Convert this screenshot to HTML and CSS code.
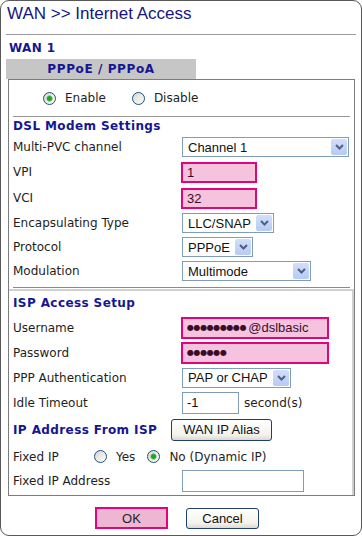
FILE: index.html
```html
<!DOCTYPE html>
<html lang="en">
<head>
  <meta charset="UTF-8" />
  <title>WAN - Internet Access</title>
  <link rel="stylesheet" href="styles.css">
</head>
<body>

  <div class="frame">
    <div class="title">WAN &gt;&gt; Internet Access</div>
    <div class="wan-name">WAN 1</div>
    <div class="tab">PPPoE / PPPoA</div>

    <div class="panel">
      <div class="dsl">
        <div class="enable-row">
          <label class="radio-opt"><span class="radio checked"></span>Enable</label>
          <label class="radio-opt"><span class="radio"></span>Disable</label>
        </div>
        <div class="heading">DSL Modem Settings</div>
        <div class="row">
          <span class="label">Multi-PVC channel</span>
          <div class="select w-channel"><span class="sel-text">Channel 1</span><span class="sel-arrow"><svg width="9" height="6" viewBox="0 0 9 6"><path d="M1 1l3.5 3.5L8 1" stroke="#4d6185" stroke-width="2" fill="none"/></svg></span></div>
        </div>
        <div class="row tall">
          <span class="label">VPI</span>
          <div class="pink w-short">1</div>
        </div>
        <div class="row tall">
          <span class="label">VCI</span>
          <div class="pink w-short">32</div>
        </div>
        <div class="row">
          <span class="label">Encapsulating Type</span>
          <div class="select w-encap"><span class="sel-text">LLC/SNAP</span><span class="sel-arrow"><svg width="9" height="6" viewBox="0 0 9 6"><path d="M1 1l3.5 3.5L8 1" stroke="#4d6185" stroke-width="2" fill="none"/></svg></span></div>
        </div>
        <div class="row">
          <span class="label">Protocol</span>
          <div class="select w-proto"><span class="sel-text">PPPoE</span><span class="sel-arrow"><svg width="9" height="6" viewBox="0 0 9 6"><path d="M1 1l3.5 3.5L8 1" stroke="#4d6185" stroke-width="2" fill="none"/></svg></span></div>
        </div>
        <div class="row">
          <span class="label">Modulation</span>
          <div class="select w-mod"><span class="sel-text">Multimode</span><span class="sel-arrow"><svg width="9" height="6" viewBox="0 0 9 6"><path d="M1 1l3.5 3.5L8 1" stroke="#4d6185" stroke-width="2" fill="none"/></svg></span></div>
        </div>
      </div>

      <div class="isp">
        <div class="heading isp-heading">ISP Access Setup</div>
        <div class="row mid">
          <span class="label">Username</span>
          <div class="pink w-long"><span class="dots">●●●●●●●●●</span>@dslbasic</div>
        </div>
        <div class="row mid">
          <span class="label">Password</span>
          <div class="pink w-long"><span class="dots">●●●●●●</span></div>
        </div>
        <div class="row mid">
          <span class="label">PPP Authentication</span>
          <div class="select w-auth"><span class="sel-text">PAP or CHAP</span><span class="sel-arrow"><svg width="9" height="6" viewBox="0 0 9 6"><path d="M1 1l3.5 3.5L8 1" stroke="#4d6185" stroke-width="2" fill="none"/></svg></span></div>
        </div>
        <div class="row mid">
          <span class="label">Idle Timeout</span>
          <input class="field w-idle" type="text" value="-1">
          <span class="unit">second(s)</span>
        </div>
        <div class="row ip-row">
          <span class="heading ip-heading">IP Address From ISP</span>
          <button class="xp-btn alias-btn">WAN IP Alias</button>
        </div>
        <div class="row mid">
          <span class="label fixed-label">Fixed IP</span>
          <label class="radio-opt"><span class="radio"></span>Yes</label>
          <label class="radio-opt no-opt"><span class="radio checked"></span>No (Dynamic IP)</label>
        </div>
        <div class="row last">
          <span class="label">Fixed IP Address</span>
          <input class="field w-ip" type="text" value="">
        </div>
      </div>
    </div>

    <div class="actions">
      <button class="ok-btn">OK</button>
      <button class="xp-btn cancel-btn">Cancel</button>
    </div>
  </div>

</body>
</html>
```

FILE: styles.css
```css
body {
  margin: 0;
  font-family: "DejaVu Sans", Verdana, sans-serif;
  font-size: 12px;
  color: #1e1e1e;
  background: #fff;
}

.frame {
  width: 362px;
  height: 536px;
  box-sizing: border-box;
  border: 1px solid #595959;
  border-radius: 9px;
  padding: 0 5px;
}

.title {
  height: 34px;
  box-sizing: border-box;
  border-bottom: 1px solid #9a9a9a;
  padding: 3px 0 0 1px;
  font: 17px/20px "Liberation Sans", Arial, sans-serif;
  color: #16167e;
}

.wan-name {
  height: 24px;
  box-sizing: border-box;
  padding: 5px 0 0 3px;
  line-height: 16px;
  font-weight: bold;
  letter-spacing: 0.4px;
  color: #161693;
}

.tab {
  width: 190px;
  height: 20px;
  line-height: 20px;
  background: #c6c6c6;
  text-align: center;
  font-weight: bold;
  letter-spacing: 0.6px;
  color: #161693;
}

.panel {
  margin: 0 1px 0 2px;
  border: 1px solid #7c7c7c;
}

.dsl {
  margin: 0 4px;
  padding-bottom: 4px;
  border-bottom: 1px solid #8a8a8a;
}

.enable-row {
  height: 37px;
  box-sizing: border-box;
  border-bottom: 1px solid #999;
  display: flex;
  align-items: center;
  gap: 26px;
  padding-left: 30px;
}

.radio-opt {
  display: flex;
  align-items: center;
  gap: 9px;
}

.radio {
  display: inline-block;
  width: 13px;
  height: 13px;
  box-sizing: border-box;
  border: 1px solid #1c5180;
  border-radius: 50%;
  background: linear-gradient(135deg, #d6d6d0, #fff);
}

.radio.checked {
  background: radial-gradient(circle, #23a523 0 2px, #7ccc7c 2.8px, transparent 3.6px),
              linear-gradient(135deg, #d6d6d0, #fff);
}

.heading {
  height: 18px;
  line-height: 18px;
  font-weight: bold;
  letter-spacing: 0.4px;
  color: #161693;
}

.row {
  display: flex;
  align-items: center;
  height: 24px;
}

.row.tall {
  height: 26px;
}

.row.mid {
  height: 25px;
}

.label {
  width: 169px;
  flex: none;
}

/* drop-down look */
.select {
  height: 20px;
  box-sizing: border-box;
  border: 1px solid #7f9db9;
  background: #fff;
  display: flex;
  align-items: center;
  font: 13px "Liberation Sans", Arial, sans-serif;
  color: #111;
}

.sel-text {
  flex: 1;
  padding-left: 5px;
  white-space: nowrap;
}

.sel-arrow {
  width: 16px;
  height: 16px;
  margin-right: 1px;
  border-radius: 2px;
  background: linear-gradient(#d3defb, #b7caf5);
  display: flex;
  align-items: center;
  justify-content: center;
}

.w-channel { width: 167px; }
.w-encap { width: 92px; }
.w-proto { width: 71px; }
.w-mod { width: 129px; }
.w-auth { width: 109px; }

.pink {
  height: 21px;
  box-sizing: border-box;
  margin-left: -1px;
  padding: 0 4px;
  border: 2px solid #e0057a;
  background: #f6c3de;
  display: flex;
  align-items: center;
  font: 13px "Liberation Sans", Arial, sans-serif;
  color: #3b0b2a;
  white-space: nowrap;
  overflow: hidden;
}

.row.mid .pink {
  height: 22px;
}

.w-short { width: 76px; }
.w-long { width: 148px; }

.dots {
  font-family: "DejaVu Sans", sans-serif;
  font-size: 8px;
  letter-spacing: -0.4px;
  margin-right: 2px;
  color: #3b0b2a;
}

.field {
  height: 22px;
  box-sizing: border-box;
  margin: 0;
  padding: 0 4px;
  border: 1px solid #7f9db9;
  font: 13px "Liberation Sans", Arial, sans-serif;
  color: #111;
}

.w-idle { width: 57px; }
.w-ip { width: 122px; }

.unit {
  margin-left: 5px;
}

.isp {
  margin-top: 1px;
  padding: 0 2px 3px 4px;
  border-top: 2px solid #d0d0d0;
  border-right: 2px solid #d0d0d0;
}

.isp-heading {
  height: 24px;
  line-height: 24px;
}

.row.ip-row {
  height: 29px;
}

.ip-heading {
  width: 158px;
  flex: none;
}

.xp-btn {
  box-sizing: border-box;
  border: 1px solid #1f3f6e;
  border-radius: 3px;
  background: linear-gradient(#fff, #f3f2ec 75%, #dcd9cc);
  font: 13px "Liberation Sans", Arial, sans-serif;
  color: #111;
  padding: 0;
}

.alias-btn {
  width: 101px;
  height: 22px;
}

.fixed-label {
  width: 81px;
}

.no-opt {
  margin-left: 12px;
}

.row.last {
  height: 23px;
}

.actions {
  display: flex;
  justify-content: center;
  align-items: center;
  gap: 18px;
  margin-top: 11px;
  padding-right: 8px;
}

.ok-btn {
  width: 73px;
  height: 22px;
  box-sizing: border-box;
  border: 2px solid #e0057a;
  background: #efb6d3;
  font: 13px "Liberation Sans", Arial, sans-serif;
  color: #222;
  padding: 0;
}

.cancel-btn {
  width: 73px;
  height: 21px;
}
```
